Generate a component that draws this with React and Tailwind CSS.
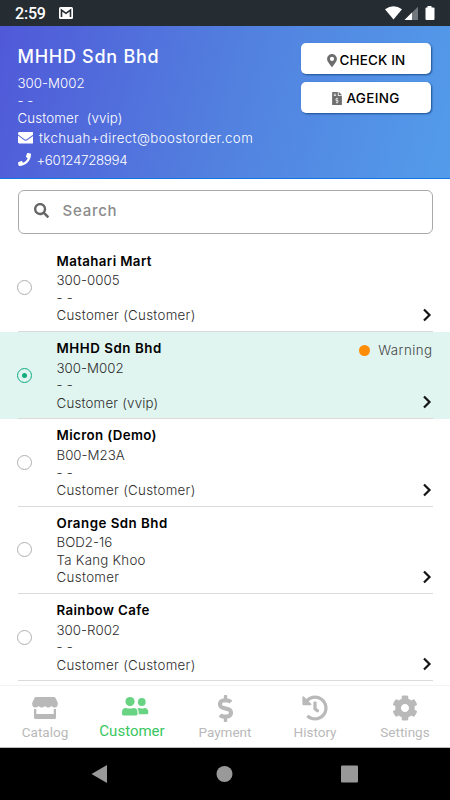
import {
  FaDollarSign, FaHistory, FaCog, FaEnvelope, FaPhone,
  FaFileInvoiceDollar, FaSearch, FaMapMarkerAlt,
} from "react-icons/fa";

const customers = [
  { name: "Matahari Mart", code: "300-0005", contact: "- -", type: "Customer (Customer)", nameTracking: "tracking-[0.380px]", typeTracking: "tracking-[0.300px]" },
  { name: "MHHD Sdn Bhd", code: "300-M002", contact: "- -", type: "Customer (vvip)", selected: true, warning: true, nameTracking: "tracking-[0.550px]", typeTracking: "tracking-[0.200px]" },
  { name: "Micron (Demo)", code: "B00-M23A", contact: "- -", type: "Customer (Customer)", nameTracking: "tracking-[0.380px]", typeTracking: "tracking-[0.300px]" },
  { name: "Orange Sdn Bhd", code: "BOD2-16", contact: "Ta Kang Khoo", type: "Customer", nameTracking: "tracking-[0.500px]", typeTracking: "tracking-[0.350px]" },
  { name: "Rainbow Cafe", code: "300-R002", contact: "- -", type: "Customer (Customer)", nameTracking: "tracking-[0.380px]", typeTracking: "tracking-[0.300px]" },
];

function StoreIcon({ className }) {
  return (
    <svg className={className} viewBox="0 0 26 22" fill="currentColor">
      <path d="M4 0H22Q23 0 23.500 0.900L25.700 5.500Q26.300 10.500 22.800 10.500Q20.800 10.500 19.500 9Q18 10.500 16.250 10.500Q14.500 10.500 13 9Q11.500 10.500 9.750 10.500Q8 10.500 6.500 9Q5.200 10.500 3.200 10.500Q-0.300 10.500 0.300 5.500L2.500 0.900Q3 0 4 0Z" />
      <path d="M2 12H4.300V17H21.700V12H24V20.500Q24 22 22.500 22H3.500Q2 22 2 20.500Z" />
    </svg>
  );
}

function PeopleIcon({ className }) {
  return (
    <svg className={className} viewBox="0 0 27 19" fill="currentColor">
      <circle cx="8" cy="4.600" r="4.600" />
      <circle cx="19.800" cy="5" r="3.900" />
      <path d="M0 17V15Q0 11 4 11Q8 12.200 11.500 11Q15.500 11 15.500 15V17Q15.500 18.500 14 18.500H1.500Q0 18.500 0 17Z" />
      <path d="M15.300 11.500Q16.300 11 17.300 11Q20 12 22.500 11Q26.300 11.300 26.300 15V16Q26.300 17.300 25 17.300H16.700V15Q16.700 13 15.300 11.500Z" />
    </svg>
  );
}

const tabs = [
  { label: "Catalog", Icon: StoreIcon, size: "h-[22px] w-[26px]" },
  { label: "Customer", Icon: PeopleIcon, size: "h-[19px] w-[27px]" , active: true },
  { label: "Payment", Icon: FaDollarSign, size: "h-[27px] w-[27px]" },
  { label: "History", Icon: FaHistory, size: "h-[26px] w-[26px]" },
  { label: "Settings", Icon: FaCog, size: "h-[26px] w-[26px]" },
];

function StatusBar() {
  return (
    <div className="flex h-[26px] shrink-0 items-center bg-[#262d32] pl-[15px] pr-[15px] text-white">
      <span className="pt-[2px] font-['Roboto'] text-[16px] font-medium leading-none tracking-[-0.200px]">2:59</span>
      <svg className="ml-[13px] h-[12px] w-[14px]" viewBox="0 0 14 12">
        <rect width="14" height="12" rx="1.5" fill="#fff" />
        <path d="M2.500 10V3L7 6.300L11.500 3V10" fill="none" stroke="#262d32" strokeWidth="1.600" />
      </svg>
      <svg className="ml-auto h-[14px] w-[50px]" viewBox="0 0 50 14">
        <path d="M0 3.300Q8.500-3 17 3.300L8.500 13.500Z" fill="#fff" />
        <path d="M19.500 14L33 0.800V14Z" fill="#73787c" />
        <path d="M19.500 14L27 6.600V14Z" fill="#fff" />
        <path d="M42.500 0h4v1.500h2q1 0 1 1V13q0 1-1 1h-7q-1 0-1-1V2.500q0-1 1-1h1Z" fill="#fff" />
      </svg>
    </div>
  );
}

function Header() {
  return (
    <header className="flex h-[153px] shrink-0 justify-between border-b border-[#1475e4] bg-[linear-gradient(105deg,#5059d8_0%,#5280df_50%,#539cea_100%)] pl-[17.500px] pr-[19px] text-white">
      <div className="flex flex-col whitespace-nowrap text-[13.300px] font-light">
        <h1 className="mt-[19px] text-[18px] font-medium leading-[24px] tracking-[0.720px]">MHHD Sdn Bhd</h1>
        <span className="mt-[6px] leading-[17.500px]">300-M002</span>
        <span className="leading-[17.500px]">- -</span>
        <span className="leading-[17.500px] tracking-[0.150px]">Customer &nbsp;(vvip)</span>
        <span className="flex items-center leading-[21.500px] tracking-[0.400px]">
          <FaEnvelope className="mb-[2px] mr-[6px] h-[15.500px] w-[15.500px]" />tkchuah+direct@boostorder.com
        </span>
        <span className="flex items-center leading-[22px] tracking-[-0.320px]">
          <FaPhone className="mb-[2px] mr-[6px] h-[13px] w-[13px]" />+60124728994
        </span>
      </div>
      <div className="flex w-[130px] flex-col gap-[8px] pt-[17px] text-[13.500px] font-medium text-black">
        <button className="flex h-[31px] items-center justify-center gap-[3px] rounded-[5px] bg-white pt-[3px] tracking-[0.150px] shadow-[1px_1px_2px_#1c4f91]">
          <FaMapMarkerAlt className="h-[13px] w-[10px] text-[#6d6d6d]" />CHECK IN
        </button>
        <button className="flex h-[31px] items-center justify-center gap-[4px] rounded-[5px] bg-white pt-[2px] tracking-[0.300px] shadow-[1px_1px_2px_#1c4f91]">
          <FaFileInvoiceDollar className="h-[13px] w-[10px] text-[#6d6d6d]" />AGEING
        </button>
      </div>
    </header>
  );
}

function Row({ c }) {
  return (
    <li className={c.selected ? "h-[87.400px] bg-[#e0f5f0] px-[17.500px]" : "h-[87.400px] px-[17.500px]"}>
      <div className="flex h-full border-b border-[#dadada]">
        <div className="-ml-[0.500px] flex w-[39.500px] items-center">
          {c.selected ? (
            <span className="flex h-[15px] w-[15px] items-center justify-center rounded-full border-[1.500px] border-[#10ac7c]">
              <span className="h-[5px] w-[5px] rounded-full bg-[#10ac7c]" />
            </span>
          ) : (
            <span className="h-[15px] w-[15px] rounded-full border-[1.500px] border-[#b0b0b0]" />
          )}
        </div>
        <div className="flex flex-1 flex-col whitespace-nowrap pt-[6px] text-[13.300px] font-light leading-[17.500px] text-[#2d2d2d]">
          <span className={"mb-[1.800px] text-[13.300px] font-semibold leading-[20px] text-black " + c.nameTracking}>{c.name}</span>
          <span>{c.code}</span>
          <span className="tracking-[0.250px]">{c.contact}</span>
          <span className={c.typeTracking}>{c.type}</span>
        </div>
        <div className="flex flex-col items-end justify-between pb-[9px] pt-[10px]">
          <span className="flex h-[18px] items-center gap-[8px] text-[13.300px] font-light tracking-[0.450px] text-[#444]">
            {c.warning && <><i className="h-[11px] w-[11px] rounded-full bg-[#ff8c05]" />Warning</>}
          </span>
          <svg className="mr-px h-[14px] w-[10px]" viewBox="0 0 10 14">
            <path d="M2 1.500L7.500 7L2 12.500" fill="none" stroke="#151515" strokeWidth="2.200" />
          </svg>
        </div>
      </div>
    </li>
  );
}

export default function App() {
  return (
    <div className="flex h-[800px] w-[450px] flex-col overflow-hidden bg-white font-['Inter',sans-serif]">
      <StatusBar />
      <Header />
      <main className="flex min-h-0 flex-1 flex-col overflow-hidden">
        <div className="mx-[17.500px] mt-[11px] flex h-[44px] shrink-0 items-center rounded-[6px] border border-[#a9a9a9] pl-[15px]">
          <FaSearch className="mb-[3px] h-[15px] w-[15px] text-[#666]" />
          <span className="ml-[14px] pb-[1px] text-[15px] font-medium tracking-[0.750px] text-[#8b8b8b]">Search</span>
        </div>
        <ul className="mt-[10.500px]">
          {customers.map((c) => <Row key={c.name} c={c} />)}
        </ul>
      </main>
      <nav className="grid h-[63px] shrink-0 grid-cols-5 border-b border-t border-b-[#bbb] border-t-[#f3f3f3] bg-white font-['Roboto']">
        {tabs.map(({ label, Icon, size, active }) => (
          <div key={label} className={active ? "flex flex-col items-center text-[15px] text-[#38c760]" : "flex flex-col items-center text-[13.500px] text-[#b9b9b9]"}>
            <span className={active ? "flex h-[36px] items-center pt-[5px] text-[#68d483]" : "flex h-[36px] items-center pt-[8px] text-[#b9b9b9]"}>
              <Icon className={size} />
            </span>
            <span className={active ? "mr-[6px] leading-[19px]" : "leading-[20px]"}>{label}</span>
          </div>
        ))}
      </nav>
      <div className="flex h-[52px] shrink-0 items-center justify-center bg-black">
        <svg className="h-[20px] w-[268px]" viewBox="0 0 268 20">
          <path d="M0.500 10L16 1v18Z" fill="#999" />
          <circle cx="133.500" cy="10" r="8" fill="#999" />
          <rect x="250" y="1.500" width="17" height="17" rx="1" fill="#999" />
        </svg>
      </div>
    </div>
  );
}
